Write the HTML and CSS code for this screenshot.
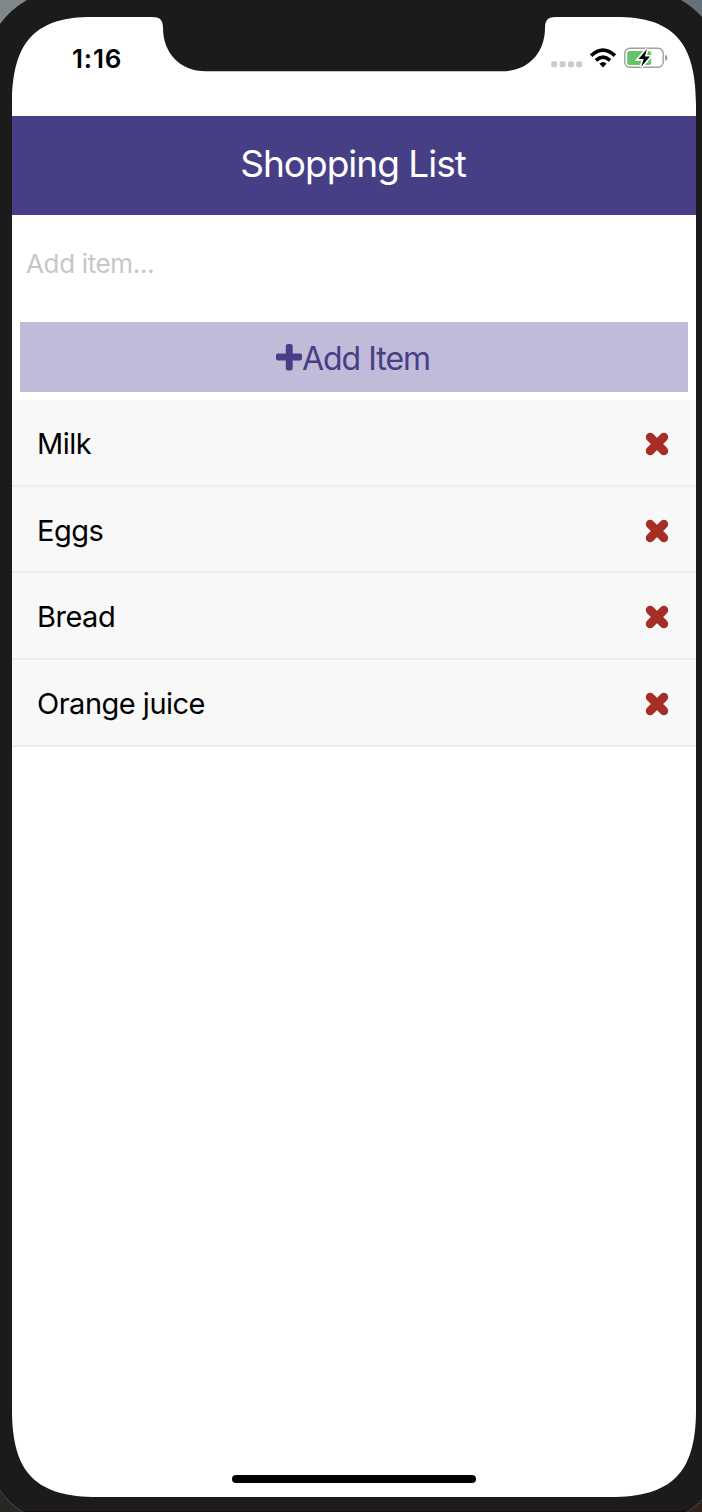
FILE: index.html
```html
<!DOCTYPE html>
<html lang="en">
<head>
<meta charset="utf-8">
<title>Shopping List</title>
<link rel="stylesheet" href="styles.css">
</head>
<body>
<div class="device">
  <main class="screen">
    <div class="status">
      <span class="time">1:16</span>
      <svg class="status-icons" width="118" height="24" viewBox="0 0 118 24" aria-hidden="true">
        <g fill="#cbcbcb">
          <rect x="1.2" y="14.3" width="6" height="6" rx="1.8"/>
          <rect x="9.6" y="14.3" width="6" height="6" rx="1.8"/>
          <rect x="18" y="14.3" width="6" height="6" rx="1.8"/>
          <rect x="26.2" y="14.3" width="6" height="6" rx="1.8"/>
        </g>
        <path d="M53 20.4 L49.4 16.7 Q53 13.3 56.6 16.7 Z" fill="#000"/>
        <path d="M45.9 13.3 Q53 7 60.1 13.3" fill="none" stroke="#000" stroke-width="3.7"/>
        <path d="M41.1 8.6 Q53 -2.4 64.9 8.6" fill="none" stroke="#000" stroke-width="3.7"/>
        <rect x="74.8" y="1.3" width="38.4" height="19" rx="5" fill="#fff" stroke="#a0a0a0" stroke-width="1.4"/>
        <path d="M115 7.8 C118.3 9 118.3 12.8 115 14 Z" fill="#a0a0a0"/>
        <rect x="77.2" y="3.9" width="24" height="14" rx="2.5" fill="#65c466"/>
        <path d="M97 2 L88.5 12 H93.7 L91.2 19.8 L100 9.6 H94.8 Z" fill="#000" stroke="#fff" stroke-width="3.4" paint-order="stroke"/>
      </svg>
    </div>
    <header class="title-bar"><h1 class="title">Shopping List</h1></header>
    <form class="form">
      <input class="field" type="text" placeholder="Add item..." aria-label="Add item">
      <button class="add" type="button">
        <svg class="plus" width="26" height="27" viewBox="0 0 26 27" aria-hidden="true"><path d="M12 0 H14.5 Q16.7 0 16.7 2 V9.6 H24 Q26 9.6 26 11.6 V14.6 Q26 16.6 24 16.6 H16.7 V24.6 Q16.7 26.6 14.5 26.6 H12 Q9.8 26.6 9.8 24.6 V16.6 H2 Q0 16.6 0 14.6 V11.6 Q0 9.6 2 9.6 H9.8 V2 Q9.8 0 12 0 Z"/></svg><span class="add-label">Add Item</span>
      </button>
    </form>
    <ul class="list">
      <li class="item"><span>Milk</span><svg class="remove" viewBox="0 0 22 22"><path d="M4.1 4.1 L17.9 17.9 M17.9 4.1 L4.1 17.9"/></svg></li>
      <li class="item"><span>Eggs</span><svg class="remove" viewBox="0 0 22 22"><path d="M4.1 4.1 L17.9 17.9 M17.9 4.1 L4.1 17.9"/></svg></li>
      <li class="item"><span>Bread</span><svg class="remove" viewBox="0 0 22 22"><path d="M4.1 4.1 L17.9 17.9 M17.9 4.1 L4.1 17.9"/></svg></li>
      <li class="item"><span>Orange juice</span><svg class="remove" viewBox="0 0 22 22"><path d="M4.1 4.1 L17.9 17.9 M17.9 4.1 L4.1 17.9"/></svg></li>
    </ul>
    <div class="home-indicator"></div>
  </main>
  <svg class="bezel" width="702" height="1512" viewBox="0 0 702 1512" aria-hidden="true">
    <path fill="#1b1b1b" fill-rule="evenodd" d="M0 0 H702 V1512 H0 Z M12 104 C12 40 37 17 92 17 H152 C160 17 163 20 163 28 C163 53 180 71.3 206 71.3 H502 C528 71.3 545 53 545 28 C545 20 548 17 556 17 H616 C671 17 696 40 696 104 V1410 C696 1474 671 1497 610 1497 H98 C37 1497 12 1474 12 1410 Z"/>
    <path fill="#7f898c" d="M0 0 H27 Q11 9 0 24 Z"/>
    <path fill="#66717c" d="M681 0 H702 V17 Q693 7 681 0 Z"/>
    <path fill="#292724" stroke="#4a4a4a" d="M-1 1489 Q9 1504 24 1513 H-1 Z"/>
    <path fill="#30231c" stroke="#4a4a4a" d="M703 1499 Q695 1507 686 1513 H703 Z"/>
    <path fill="#150b12" d="M24 1511 H686 V1512 H24 Z"/>
  </svg>
</div>
</body>
</html>
```

FILE: styles.css
```css
* { box-sizing: border-box; }
body { margin: 0; font-family: Inter, "Liberation Sans", sans-serif; background: #1b1b1b; }
.device { position: relative; width: 702px; height: 1512px; overflow: hidden; padding: 17px 6px 15px 12px; background: #1b1b1b; }
.screen { height: 1480px; display: flex; flex-direction: column; background: #fff; }
.bezel { position: absolute; inset: 0; pointer-events: none; }
.status { height: 99px; flex: none; display: flex; justify-content: space-between; align-items: flex-start; padding: 26px 28px 0 60px; }
.time { font-size: 26px; line-height: 32px; font-weight: 600; letter-spacing: 0.8px; }
.status-icons { margin-top: 4px; }
.title-bar { height: 99px; flex: none; display: flex; align-items: center; justify-content: center; padding: 0 2px 3px 0; background: #473f85; }
.title { margin: 0; font-size: 37px; line-height: 44px; font-weight: 400; color: #fff; letter-spacing: -1px; }
.form { display: flex; flex-direction: column; padding: 0 8px 8px; margin: 0; }
.field { height: 99px; margin: 0 0 8px; padding: 0 6px 2px; border: 0; outline: 0; background: transparent; font: 400 26px/32px Inter, "Liberation Sans", sans-serif; letter-spacing: -0.35px; }
.field::placeholder { color: #c7c7c7; opacity: 1; }
.add { height: 70px; padding: 0 2px 0 0; border: 0; display: flex; align-items: center; justify-content: center; background: #c0bbd9; color: #473f85; font: 400 32px/40px Inter, "Liberation Sans", sans-serif; letter-spacing: -1px; }
.add-label { padding-top: 4px; }
.plus { flex: none; fill: #473f85; }
.list { list-style: none; margin: 0; padding: 0; }
.item { height: 86.67px; padding: 3.5px 28px 0 25px; display: flex; align-items: center; justify-content: space-between; background: #f8f8f8; border-bottom: 2px solid #eee; font-size: 29px; line-height: 36px; letter-spacing: -0.5px; color: #000; }
.remove { width: 22px; height: 22px; fill: none; stroke: #a62e26; stroke-width: 8.6; stroke-linecap: round; overflow: visible; }
.home-indicator { width: 244px; height: 8px; margin: auto auto 14px; border-radius: 4px; background: #000; }
```
